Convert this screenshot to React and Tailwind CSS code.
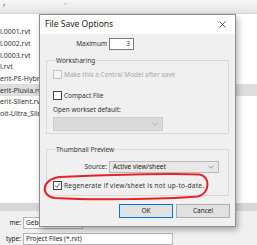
const files = [
  "l.0001.rvt",
  "l.0002.rvt",
  "l.0003.rvt",
  "l.rvt",
  "erit-PE-Hybrid.rvt",
  "erit-Pluvia.rvt",
  "erit-Silent.rvt",
  "oit-Ultra_Slim.rvt",
];

function Checkbox({ checked, disabled }) {
  return (
    <span
      className={
        "flex items-center justify-center w-[9px] h-[9px] shrink-0 border " +
        (disabled ? "border-[#c4c4c4] bg-[#f4f4f4]" : "border-[#444] bg-white")
      }
    >
      {checked && (
        <svg width="7" height="7" viewBox="0 0 7 7">
          <path d="M1 3.6 L2.8 5.4 L6 1.4" fill="none" stroke="#555" strokeWidth="1" />
        </svg>
      )}
    </span>
  );
}

function Chevron({ color }) {
  return (
    <svg width="6" height="4" viewBox="0 0 6 4">
      <path d="M0.5 0.8 L3 3.2 L5.5 0.8" fill="none" stroke={color} strokeWidth="0.9" />
    </svg>
  );
}

export default function App() {
  return (
    <div className="relative w-[257px] h-[245px] overflow-hidden bg-white font-['Noto_Sans',sans-serif] text-[#222]">
      {/* file list behind the dialog */}
      <div className="relative h-[14px] bg-gradient-to-b from-[#f7f7f7] to-[#e4e4e4] border-b border-[#d4d4d4]">
        <span className="absolute left-[3px] top-[1px] text-[6px] text-[#555]">r</span>
        <span className="absolute left-[64px] top-[1px] text-[5px] text-[#888]">^</span>
      </div>
      <div className="pt-[12px] flex flex-col">
        {files.map((name, i) => (
          <div
            key={name}
            className={
              "h-[11.7px] flex items-center whitespace-nowrap text-[7px] leading-none text-[#333] " +
              (i === 5 ? "bg-[#dedede]" : "")
            }
          >
            {name}
          </div>
        ))}
      </div>

      <div className="absolute left-0 top-[203px] w-full h-[8px] bg-[#d7d7d7]" />
      <div className="absolute left-0 top-[211px] w-full h-[34px] bg-[#f0f0f0] flex flex-col gap-[4px] pt-[6px] text-[6.5px]">
        <div className="flex items-center h-[12px]">
          <span className="w-[23px] text-right pr-[2px]">me:</span>
          <span className="h-[12px] w-[60px] bg-white border border-[#b5b5b5] pl-[2px] flex items-center">Gebouw</span>
        </div>
        <div className="flex items-center h-[12px]">
          <span className="w-[23px] text-right pr-[2px]">type:</span>
          <span className="h-[12px] w-[150px] bg-white border border-[#b5b5b5] pl-[2px] flex items-center">
            Project Files (*.rvt)
          </span>
        </div>
      </div>

      {/* File Save Options dialog */}
      <div className="absolute left-[39px] top-[14px] w-[197px] h-[213px] border border-[#8e8e8e] bg-[#f0f0f0] shadow-[2px_3px_6px_rgba(0,0,0,0.3)] flex flex-col text-[6.5px] text-[#333]">
        <div className="h-[19px] bg-white flex items-center justify-between pl-[5px] pr-[9px]">
          <span className="text-[8.5px] text-[#222]">File Save Options</span>
          <svg width="7" height="7" viewBox="0 0 7 7">
            <path d="M0.5 0.5 L6.5 6.5 M6.5 0.5 L0.5 6.5" stroke="#333" strokeWidth="0.8" />
          </svg>
        </div>

        <div className="flex items-center mt-[4px]">
          <span className="w-[69px] text-right pr-[2px]">Maximum</span>
          <span className="w-[25px] h-[12px] bg-white border border-[#7a7a7a] flex items-center justify-end pr-[3px] text-[6.5px]">
            3
          </span>
        </div>

        <fieldset className="mx-[6px] mt-[6px] h-[78px] border border-[#d8d8d8] px-[6px]">
          <legend className="ml-[2px] px-[1px] text-[#333]">Worksharing</legend>
          <div className="flex items-center gap-[2px] mt-[4px] text-[#a8a8a8]">
            <Checkbox disabled />
            <span>Make this a Central Model after save</span>
          </div>
          <div className="flex items-center gap-[2px] mt-[11px]">
            <Checkbox />
            <span>Compact File</span>
          </div>
          <div className="mt-[5px]">Open workset default:</div>
          <div className="mt-[2px] w-[110px] h-[14px] bg-[#dadada] border border-[#cdcdcd] flex items-center justify-end pr-[4px]">
            <Chevron color="#a8a8a8" />
          </div>
        </fieldset>

        <fieldset className="mx-[6px] mt-[11px] h-[51px] border border-[#d8d8d8] px-[6px]">
          <legend className="ml-[2px] px-[1px] text-[#333]">Thumbnail Preview</legend>
          <div className="flex items-center mt-[6px]">
            <span className="w-[56px] text-right pr-[2px]">Source:</span>
            <span className="w-[110px] h-[12px] bg-[#e8e8e8] border border-[#b9b9b9] flex items-center justify-between pl-[3px] pr-[4px] text-[#222]">
              Active view/sheet
              <Chevron color="#888" />
            </span>
          </div>
          <div className="flex items-center gap-[2px] mt-[8px]">
            <Checkbox checked />
            <span className="tracking-[0.25px]">Regenerate if view/sheet is not up-to-date.</span>
          </div>
        </fieldset>

        <div className="flex justify-end gap-[3px] mt-auto mb-[8px] mr-[5px]">
          <button className="w-[54px] h-[14px] bg-[#e1e1e1] border border-[#0078d7] text-[6.5px] text-[#222]">OK</button>
          <button className="w-[54px] h-[14px] bg-[#e1e1e1] border border-[#adadad] text-[6.5px] text-[#222]">Cancel</button>
        </div>
      </div>

      {/* red annotation */}
      <svg className="absolute left-0 top-0 pointer-events-none" width="257" height="245" viewBox="0 0 257 245">
        <path
          d="M60 177 C100 175 170 173 199 174.5 C211 176 210 193.5 198 196.5 C160 199.5 90 200 55 198 C41 196.5 40 179.5 60 177 Z"
          fill="none"
          stroke="#e5232b"
          strokeWidth="2"
        />
      </svg>
    </div>
  );
}
